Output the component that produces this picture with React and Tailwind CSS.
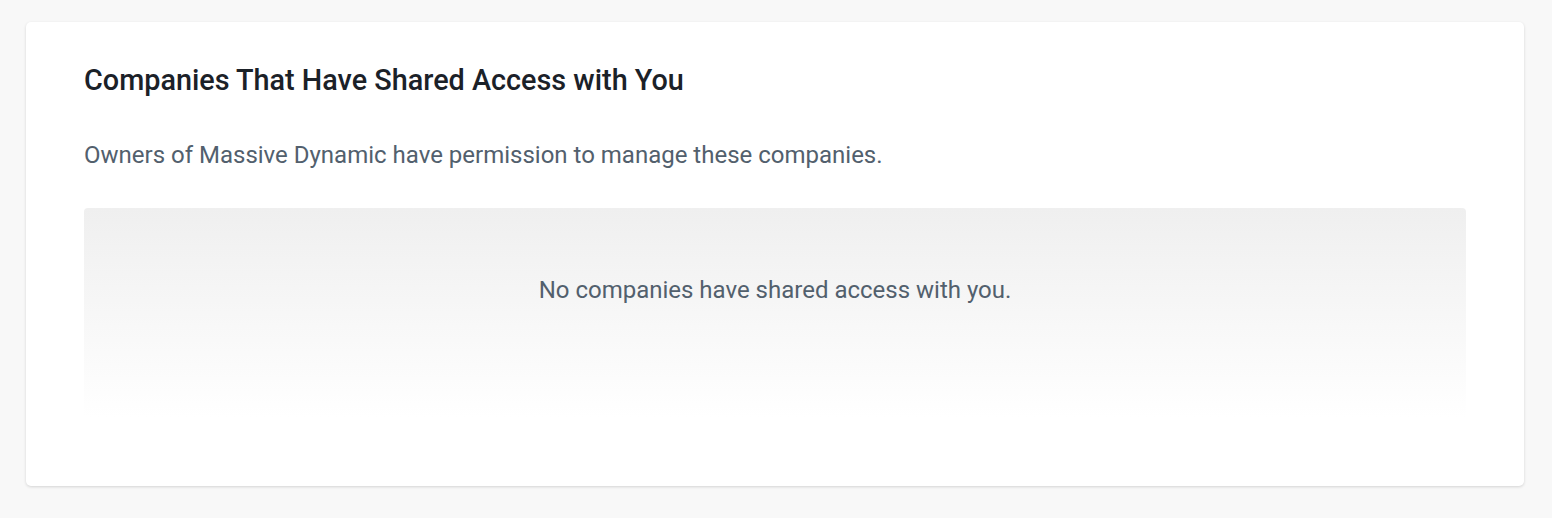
export default function App() {
	return (
		<div
			className="min-h-[518px] bg-[#f8f8f8] pl-[26px] pr-[28px] pt-[22px] pb-8"
			style={{ fontFamily: "Roboto, 'Liberation Sans', sans-serif" }}
		>
			<div className="rounded-[5px] bg-white px-[58px] pt-[40px] pb-[68px] shadow-[0_1px_3px_rgba(0,0,0,0.15)]">
				<h2 className="text-[28.8px] leading-[36px] font-medium text-[#1b2128]">
					Companies That Have Shared Access with You
				</h2>
				<p className="mt-[41px] text-[24px] leading-[32px] text-[#52606d]">
					Owners of Massive Dynamic have permission to manage these companies.
				</p>
				<div className="mt-[37px] h-[210px] rounded-[4px] bg-gradient-to-b from-[#efefef] via-[#f7f7f7] to-white pt-[66px] text-center">
					<p className="text-[24px] leading-[32px] text-[#52606d]">
						No companies have shared access with you.
					</p>
				</div>
			</div>
		</div>
	);
}
